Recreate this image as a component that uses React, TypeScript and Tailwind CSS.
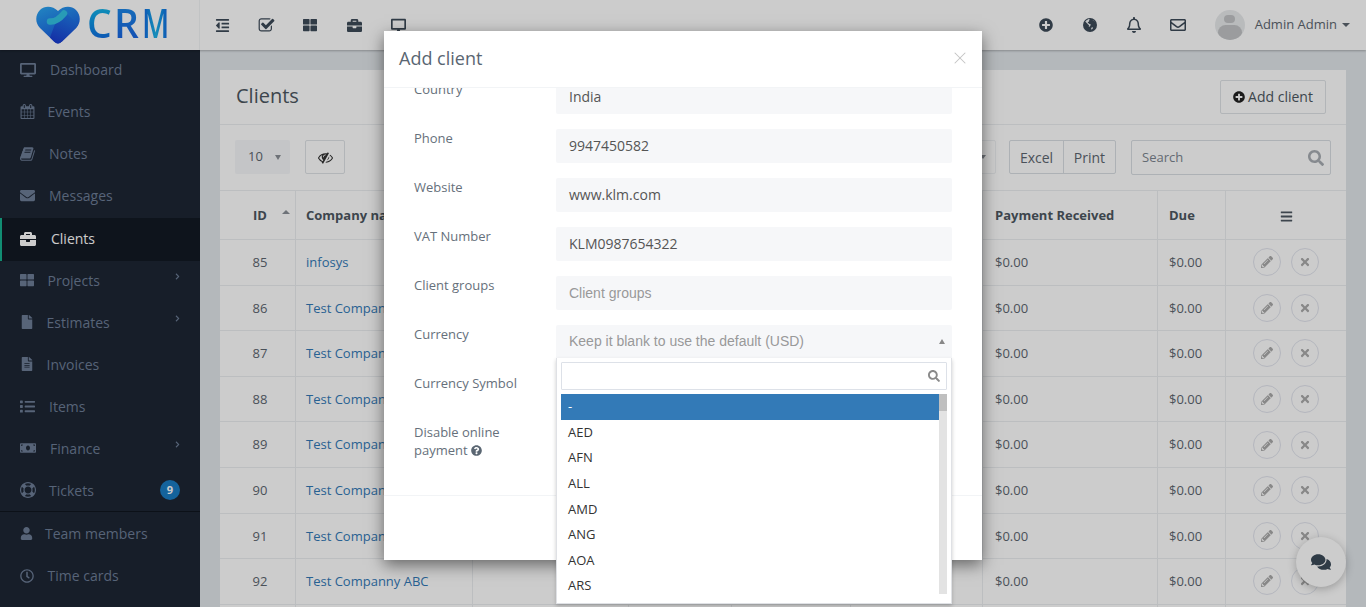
import React from "react";
import { X } from "lucide-react";
import {
  FaDesktop, FaEnvelope, FaBriefcase, FaThLarge, FaFile, FaFileAlt, FaList,
  FaMoneyBill, FaUser, FaRegClock, FaOutdent, FaPlusCircle,
  FaRegBell, FaRegEnvelope, FaPencilAlt, FaTimes, FaBars, FaComments, FaQuestionCircle, FaSearch, FaChevronRight,
} from "react-icons/fa";

const D = {
  book: "M1639 478q40 57 18 129l-275 906q-19 64-76.5 107.5t-122.5 43.5h-923q-77 0-148.5-53.5t-99.5-131.5q-24-67-2-127 0-4 3-27t4-37q1-8-3-21.5t-3-19.5q2-11 8-21t16.5-23.5 16.5-23.5q23-38 45-91.5t30-91.5q3-10 .5-30t-.5-28q3-11 17-28t17-23q21-36 42-92t25-90q1-9-2.5-32t.5-28q4-13 22-30.5t22-22.5q19-26 42.5-84.5t27.5-96.5q1-8-3-25.5t-2-26.5q2-8 9-18t18-23 17-21q8-12 16.5-30.5t15-35 16-36 19.5-32 26.5-23.5 36-11.5 47.5 5.5l-1 3q38-9 51-9h761q74 0 114 56t18 130l-274 906q-36 119-71.5 153.5t-128.5 34.5h-869q-27 0-38 15-11 16-1 43 24 70 144 70h923q29 0 56-15.5t35-41.5l300-987q7-22 5-57 38 15 59 43zm-1064 2q-4 13 2 22.5t20 9.5h608q13 0 25.5-9.5t16.5-22.5l21-64q4-13-2-22.5t-20-9.5h-608q-13 0-25.5 9.5t-16.5 22.5zm-83 256q-4 13 2 22.5t20 9.5h608q13 0 25.5-9.5t16.5-22.5l21-64q4-13-2-22.5t-20-9.5h-608q-13 0-25.5 9.5t-16.5 22.5z",
  calendar: "M192 1664h288v-288h-288v288zm352 0h320v-288h-320v288zm-352-352h288v-320h-288v320zm352 0h320v-320h-320v320zm-352-384h288v-288h-288v288zm736 736h320v-288h-320v288zm-384-736h320v-288h-320v288zm768 736h288v-288h-288v288zm-384-352h320v-320h-320v320zm-352-864v-288q0-13-9.5-22.5t-22.5-9.5h-64q-13 0-22.5 9.5t-9.5 22.5v288q0 13 9.5 22.5t22.5 9.5h64q13 0 22.5-9.5t9.5-22.5zm736 864h288v-320h-288v320zm-384-384h320v-288h-320v288zm384 0h288v-288h-288v288zm32-480v-288q0-13-9.5-22.5t-22.5-9.5h-64q-13 0-22.5 9.5t-9.5 22.5v288q0 13 9.5 22.5t22.5 9.5h64q13 0 22.5-9.5t9.5-22.5zm384-64v1280q0 52-38 90t-90 38h-1408q-52 0-90-38t-38-90v-1280q0-52 38-90t90-38h128v-96q0-66 47-113t113-47h64q66 0 113 47t47 113v96h384v-96q0-66 47-113t113-47h64q66 0 113 47t47 113v96h128q52 0 90 38t38 90z",
  lifeRing: "M896 0q182 0 348 71t286 191 191 286 71 348-71 348-191 286-286 191-348 71-348-71-286-191-191-286-71-348 71-348 191-286 286-191 348-71zm0 128q-190 0-361 90l194 194q82-28 167-28t167 28l194-194q-171-90-361-90zm-678 1129l194-194q-28-82-28-167t28-167l-194-194q-90 171-90 361t90 361zm678 407q190 0 361-90l-194-194q-82 28-167 28t-167-28l-194 194q171 90 361 90zm0-384q159 0 271.5-112.5t112.5-271.5-112.5-271.5-271.5-112.5-271.5 112.5-112.5 271.5 112.5 271.5 271.5 112.5zm484-217l194 194q90-171 90-361t-90-361l-194 194q28 82 28 167t-28 167z",
  check: "M1472 930v318q0 119-84.5 203.5t-203.5 84.5h-832q-119 0-203.5-84.5t-84.5-203.5v-832q0-119 84.5-203.5t203.5-84.5h832q63 0 117 25 15 7 18 23 3 17-9 29l-49 49q-10 10-23 10-3 0-9-2-23-6-45-6h-832q-66 0-113 47t-47 113v832q0 66 47 113t113 47h832q66 0 113-47t47-113v-254q0-13 9-22l64-64q10-10 23-10 6 0 12 3 20 8 20 29zm231-489l-814 814q-24 24-57 24t-57-24l-430-430q-24-24-24-57t24-57l110-110q24-24 57-24t57 24l263 263 647-647q24-24 57-24t57 24l110 110q24 24 24 57t-24 57z",
  eyeSlash: "M555 1335l78-141q-87-63-136-159t-49-203q0-121 61-225-229 117-381 353 167 258 427 375zm389-759q0-20-14-34t-34-14q-125 0-214.5 89.5t-89.5 214.5q0 20 14 34t34 14 34-14 14-34q0-86 61-147t147-61q20 0 34-14t14-34zm363-191q0 7-1 9-106 189-316 567t-315 566l-49 89q-10 16-28 16-12 0-134-70-16-10-16-28 0-12 44-87-143-65-263.5-173t-208.5-245q-20-31-20-69t20-69q153-235 380-371t496-136q89 0 180 17l54-97q10-16 28-16 5 0 18 6t31 15.5 33 18.5 31.5 18.5 19.5 11.5q16 10 16 27zm37 447q0 139-79 253.5t-209 164.5l280-502q8 45 8 84zm448 128q0 35-20 69-39 64-109 145-150 172-347.5 267t-419.5 95l74-132q212-18 392.5-137t301.5-307q-115-179-282-294l63-112q95 64 182.5 153t144.5 184q20 34 20 69z",
};

function Fa4({ d, size }: { d: string; size: number }) {
  return (
    <svg width={size} height={size} viewBox="0 0 1792 1792" fill="currentColor"><path d={d} /></svg>
  );
}

function Globe({ size }: { size: number }) {
  return (
    <svg width={size} height={size} viewBox="0 0 16 16">
      <circle cx="8" cy="8" r="7" fill="currentColor" />
      <path d="M6.4 2.2C5 2.7 3.9 3.6 3.2 4.8c.5.6 1.2.6 1.5 1.3.2.6.9.5 1.1 1.1.3.6 1 .6 1.2 1.2.1.5-.4.8-.2 1.3l.7.4.3-1.2c.4-.5 1-.4 1-1 0-.5-.7-.7-1.2-.8-.5-.3-.6-.9-1.2-.9-.5 0-.7-.5-.5-.9.3-.4.9-.3 1.2-.7.1-.5-.2-.9.1-1.3.2-.3.6-.3.6-.7-.4-.4-1-.6-1.7-.4z" fill="#f2f4f6" />
      <path d="M10.5 2.9c.2.5.7.7 1.1.9.5.3.8.8 1.3.9-.5-.8-1.3-1.4-2.4-1.8zM9.2 12.6c.6-.1 1.1-.5 1.5-.9.2-.4-.1-.8.3-1.1l-.9-.4c-.6.3-.9.8-.9 1.4 0 .3-.1.7 0 1z" fill="#f2f4f6" />
    </svg>
  );
}

const nav = [
  { label: "Dashboard", icon: <FaDesktop size={16} />, w: "w-[30px]" },
  { label: "Events", icon: <Fa4 d={D.calendar} size={15} />, w: "w-[27.5px]" },
  { label: "Notes", icon: <Fa4 d={D.book} size={16} />, w: "w-[29px]" },
  { label: "Messages", icon: <FaEnvelope size={15} />, w: "w-[29px]" },
  { label: "Clients", icon: <FaBriefcase size={16} />, w: "w-[31px]", active: true },
  { label: "Projects", icon: <FaThLarge size={14} />, w: "w-[27.5px]", arrow: true },
  { label: "Estimates", icon: <FaFile size={14} />, w: "w-[26.5px]", arrow: true },
  { label: "Invoices", icon: <FaFileAlt size={14} />, w: "w-[26.5px]" },
  { label: "Items", icon: <FaList size={15} />, w: "w-[29px]" },
  { label: "Finance", icon: <FaMoneyBill size={16} />, w: "w-[30px]", arrow: true },
  { label: "Tickets", icon: <Fa4 d={D.lifeRing} size={16} />, w: "w-[29px]", badge: "9", divider: true },
  { label: "Team members", icon: <FaUser size={13} />, w: "w-[25px]" },
  { label: "Time cards", icon: <FaRegClock size={14} />, w: "w-[27.5px]" },
];

const rows = [
  ["85", "infosys"], ["86", "Test Companny ABC"], ["87", "Test Companny ABC"], ["88", "Test Companny ABC"],
  ["89", "Test Companny ABC"], ["90", "Test Companny ABC"], ["91", "Test Companny ABC"], ["92", "Test Companny ABC"], ["93", "Test Companny ABC"],
];

const fields = [
  { label: "Country", value: "India" },
  { label: "Phone", value: "9947450582" },
  { label: "Website", value: "www.klm.com" },
  { label: "VAT Number", value: "KLM0987654322" },
  { label: "Client groups", placeholder: "Client groups" },
  { label: "Currency", placeholder: "Keep it blank to use the default (USD)", open: true },
  { label: "Currency Symbol", value: "" },
];

const currencies = ["AED", "AFN", "ALL", "AMD", "ANG", "AOA", "ARS"];
const gridCols = "grid grid-cols-[76px_177px_156px_103px_119px_132px_175px_68px_120px]";
const line = "border-r border-[#ebeef1]";

function Logo() {
  return (
    <div className="flex items-center w-[200px] h-full pl-9 border-r border-[#f2f4f6] shrink-0">
      <svg width="44" height="38" viewBox="0 0 44 38" className="shrink-0">
        <defs>
          <linearGradient id="hg" x1="0.1" y1="0" x2="0.6" y2="1">
            <stop offset="0" stopColor="#2aa6f2" />
            <stop offset="0.6" stopColor="#1f74e6" />
            <stop offset="1" stopColor="#1c4ad8" />
          </linearGradient>
          <linearGradient id="hd" x1="0.7" y1="0" x2="0.3" y2="1">
            <stop offset="0" stopColor="#1f7ae8" />
            <stop offset="1" stopColor="#1a3cd0" />
          </linearGradient>
        </defs>
        <path d="M22 37.5 C20.5 37.5 19.5 36.8 18 35.5 L4 22 C-1 17 -1 9 4 4 C9 -1 17 0 22 5 C27 0 35 -1 40 4 C45 9 45 17 40 22 L26 35.5 C24.5 36.8 23.5 37.5 22 37.5 Z" fill="url(#hg)" />
        <path d="M19 18 L31 8 L42.3 18.5 L40 22 L26 35.5 C24.5 36.8 23.5 37.5 22 37.5 C20 37.5 19 36.3 18 35.5 L14 31.5 Z" fill="url(#hd)" />
        <path d="M14 15.5 Q21 16 28 7.5" stroke="#33c2e4" strokeWidth="6.5" strokeLinecap="round" fill="none" />
      </svg>
      <span className="ml-[7px] pb-[4px] text-[39px] leading-[1.2] font-semibold whitespace-nowrap">
        <span className="inline-block w-[27px] bg-gradient-to-b from-[#1fc4e6] to-[#1a5ce0] bg-clip-text text-transparent">C</span>
        <span className="inline-block w-[28px] bg-gradient-to-b from-[#1f8fe8] to-[#1a5ce0] bg-clip-text text-transparent">R</span>
        <span className="inline-block w-[36px] -mr-[10px] origin-left scale-x-[0.76] bg-gradient-to-r from-[#1a5ce0] via-[#20b4e8] to-[#1a5ce0] bg-clip-text text-transparent">M</span>
      </span>
    </div>
  );
}

function TopBar() {
  const left = [
    <FaOutdent size={15} key="a" />, <Fa4 d={D.check} size={17} key="b" />, <FaThLarge size={14} key="c" />,
    <FaBriefcase size={15} key="d" />, <FaDesktop size={15} key="e" />,
  ];
  const right = [
    <FaPlusCircle size={14} key="a" />, <Globe size={16} key="b" />, <FaRegBell size={16} key="c" />, <FaRegEnvelope size={16} key="d" />,
  ];
  return (
    <header className="flex items-center h-[50px] bg-white shrink-0 shadow-[0_1px_2px_rgba(0,0,0,0.25)] relative z-10">
      <Logo />
      <div className="flex">
        {left.map((ic, i) => <span key={i} className="w-11 h-[50px] flex items-center justify-center text-[#3d4a58]">{ic}</span>)}
      </div>
      <div className="ml-auto flex items-center text-[#3d4a58]">
        {right.map((ic, i) => <span key={i} className="w-11 h-[50px] flex items-center justify-center">{ic}</span>)}
        <span className="ml-[15px] w-[30px] h-[30px] rounded-full bg-[#e8eaec] overflow-hidden flex flex-col items-center">
          <span className="mt-[5px] w-[11px] h-[11px] rounded-full bg-[#c2c4c6]" />
          <span className="mt-[2px] w-[24px] h-[20px] rounded-full bg-[#c2c4c6]" />
        </span>
        <span className="ml-[10px] text-[13px] text-[#5d6670]">Admin Admin</span>
        <span className="ml-[5px] mr-[16px] border-x-[4px] border-x-transparent border-t-[4px] border-t-[#5d6670]" />
      </div>
    </header>
  );
}

function Sidebar() {
  return (
    <aside className="w-[200px] shrink-0 bg-[#1d2634] overflow-hidden">
      <ul className="-mt-[1.5px]">
        {nav.map(({ label, icon, w, active, arrow, badge, divider }) => (
          <li key={label} className={`relative flex items-center pl-5 text-[14px] ${active ? "mt-px h-[43px] pb-[1.5px] -mb-[1.9px] bg-[#121923] text-white" : "text-[#6d7d96]"} ${divider ? "h-[43px] border-b border-[#10161f]" : active ? "" : "h-[42.1px]"}`}>
            {active && <span className="absolute left-0 top-0 bottom-0 w-[2px] bg-[#16b18f]" />}
            <span className={`${w} shrink-0`}>{icon}</span>
            <span>{label}</span>
            {arrow && <FaChevronRight size={7} className="absolute right-[19px] top-[14px]" />}
            {badge && <span className="absolute right-5 top-[11px] w-5 h-5 rounded-full bg-[#1a7cc4] text-white text-[11px] font-bold flex items-center justify-center">{badge}</span>}
          </li>
        ))}
      </ul>
    </aside>
  );
}

function ClientsCard() {
  return (
    <section className="bg-white">
      <div className="flex items-center justify-between h-[55px] pl-4 pr-5 border-b border-[#ebeef1]">
        <h1 className="text-[20px] text-[#4d5761] pb-[2px]">Clients</h1>
        <button className="h-[34px] w-[106px] pb-[2px] flex items-center justify-center gap-[3px] border border-[#dfe3e7] rounded-[2px] text-[14px] text-[#4d5761]">
          <FaPlusCircle size={12} className="text-[#222] mt-[2px]" /> Add client
        </button>
      </div>
      <div className="flex h-[66px] pt-[15px] px-[15px] border-b border-[#ebeef1]">
        <div className="flex items-center justify-between w-[55px] h-[34px] pl-[13px] pr-[9px] bg-[#f6f7f9] text-[13px] text-[#5d6670] rounded-[2px]">
          10 <span className="border-x-[3.5px] border-x-transparent border-t-[5px] border-t-[#8a8f96]" />
        </div>
        <button className="ml-[15px] w-10 h-[34px] flex items-center justify-center border border-[#dfe3e7] rounded-[2px] text-[#333]"><Fa4 d={D.eyeSlash} size={15} /></button>
        <div className="ml-auto flex">
          <div className="w-[120px] h-[34px] flex items-center justify-end pr-[9px] border border-[#eef0f3] rounded-[2px]">
            <span className="border-x-[3px] border-x-transparent border-t-[4px] border-t-[#8a8f96]" />
          </div>
          <div className="ml-[13px] flex h-[34px] text-[14px] text-[#5d6670] border border-[#d9dee3] rounded-[2px]">
            <span className="w-[54px] flex items-center justify-center border-r border-[#d9dee3]">Excel</span>
            <span className="w-[51px] flex items-center justify-center">Print</span>
          </div>
          <div className="ml-[15px] w-[200px] h-[35px] flex items-center justify-between pl-[10px] pr-[6px] border border-[#d9dee3] rounded-[2px] text-[13px] text-[#7c8590]">
            Search <FaSearch size={16} className="text-[#a8adb3]" />
          </div>
        </div>
      </div>
      <div className={`${gridCols} h-[49px] border-b border-[#ebeef1] text-[13px] font-bold text-[#4d5761]`}>
        <div className={`${line} relative flex items-center pl-[33px] pt-[2px]`}>
          ID <span className="absolute right-[5px] top-[19px] border-x-[4px] border-x-transparent border-b-[4px] border-b-[#8a8f96]" />
        </div>
        <div className={`${line} flex items-center pl-[10px] pt-[2px] whitespace-nowrap`}>Company name</div>
        <div className={line} /><div className={line} /><div className={line} /><div className={line} />
        <div className={`${line} flex items-center pl-[12px] pt-[2px]`}>Payment Received</div>
        <div className={`${line} flex items-center pl-[11px] pt-[2px]`}>Due</div>
        <div className="flex items-center justify-center pt-[2px]"><FaBars size={13} /></div>
      </div>
      {rows.map(([id, name]) => (
        <div key={id} className={`${gridCols} h-[45.6px] border-b border-[#ebeef1] text-[13px] text-[#5d6670]`}>
          <div className={`${line} flex items-center justify-center pl-[5px] pt-[1px]`}>{id}</div>
          <div className={`${line} flex items-center pl-[10px] pt-[1px] text-[#337ab7] whitespace-nowrap`}>{name}</div>
          <div className={line} /><div className={line} /><div className={line} /><div className={line} />
          <div className={`${line} flex items-center pl-[12px] pt-[1px]`}>$0.00</div>
          <div className={`${line} flex items-center pl-[11px] pt-[1px]`}>$0.00</div>
          <div className="flex items-center justify-center gap-[10px]">
            <span className="w-[28px] h-[28px] rounded-full border border-[#e2e5ee] flex items-center justify-center text-[#aaaaaa]"><FaPencilAlt size={12} /></span>
            <span className="w-[28px] h-[28px] rounded-full border border-[#e2e5ee] flex items-center justify-center text-[#aaaaaa]"><FaTimes size={12} /></span>
          </div>
        </div>
      ))}
    </section>
  );
}

function Modal() {
  return (
    <div className="absolute left-[384px] top-[31px] w-[598px] h-[529px] bg-white shadow-[0_5px_15px_rgba(0,0,0,0.5)] flex flex-col z-30">
      <div className="h-[57px] shrink-0 flex items-center justify-between pl-[15px] pr-[12px] border-b border-[#f2f4f6]">
        <h2 className="text-[18px] text-[#5a6672] pb-[2px]">Add client</h2>
        <X size={20} strokeWidth={1.25} className="text-[#c4c4c4] mb-[2px]" />
      </div>
      <div className="h-[408px] shrink-0 overflow-hidden border-b border-[#f2f4f6] text-[13px] text-[#66707b]">
        <div className="-mt-[8px] pl-[30px] pr-[30px]">
          {fields.map((f) => (
            <div key={f.label} className="flex h-[34px] mb-[15px]">
              <label className="w-[142px] shrink-0 leading-[18px]">{f.label}</label>
              <div className={`flex-1 flex items-center justify-between px-[13px] bg-[#f6f7f9] text-[14px] ${f.placeholder ? "font-['Liberation_Sans',sans-serif] text-[#999999]" : "text-[#555555] pb-[2px]"} ${f.open ? "pb-[2px]" : ""} rounded-[2px]`}>
                {f.value || f.placeholder}
                {f.open && <span className="-mr-[6px] border-x-[3.5px] border-x-transparent border-b-[5px] border-b-[#888888]" />}
              </div>
            </div>
          ))}
          <div className="flex">
            <label className="w-[142px] leading-[18px]">Disable online payment <FaQuestionCircle size={11} className="inline text-[#5a6672] align-[-1px]" /></label>
          </div>
        </div>
      </div>
      <div className="flex-1" />
      <div className="absolute left-[172px] top-[327px] w-[396px] h-[246px] bg-white border border-[#dfe1e5] border-t-0 shadow-[0_2px_4px_rgba(0,0,0,0.2)] p-[4px]">
        <div className="h-[28px] border border-[#dde1e8] rounded-[1px] flex items-center justify-end pr-[6px]">
          <FaSearch size={12} className="text-[#8a8a8a]" />
        </div>
        <div className="mt-[4px] flex h-[200px]">
          <ul className="flex-1 text-[13px] text-[#333333]">
            <li className="h-[26px] bg-[#337ab7] text-white pl-[7px] flex items-center">-</li>
            {currencies.map((c, i) => <li key={c} className={`h-[25.6px] pl-[7px] flex items-center ${i === 0 ? "-mt-[0.3px]" : ""}`}>{c}</li>)}
          </ul>
          <div className="w-[8px] bg-[#e3e3e3]"><div className="h-[17px] bg-[#bfbfbf]" /></div>
        </div>
      </div>
    </div>
  );
}

export default function App() {
  return (
    <div className="relative flex flex-col h-[607px] w-[1366px] overflow-hidden bg-[#e1e6ea] font-['Open_Sans',sans-serif]">
      <TopBar />
      <div className="flex flex-1 min-h-0">
        <Sidebar />
        <main className="flex-1 pt-5 px-5 overflow-hidden"><ClientsCard /></main>
      </div>
      <button className="absolute left-[1296px] top-[537px] w-[50px] h-[50px] rounded-full bg-white shadow-[0_2px_8px_rgba(0,0,0,0.25)] flex items-center justify-center text-[#3b4a58] z-10"><FaComments size={20} /></button>
      <div className="absolute inset-0 bg-black/20 z-20" />
      <Modal />
    </div>
  );
}
